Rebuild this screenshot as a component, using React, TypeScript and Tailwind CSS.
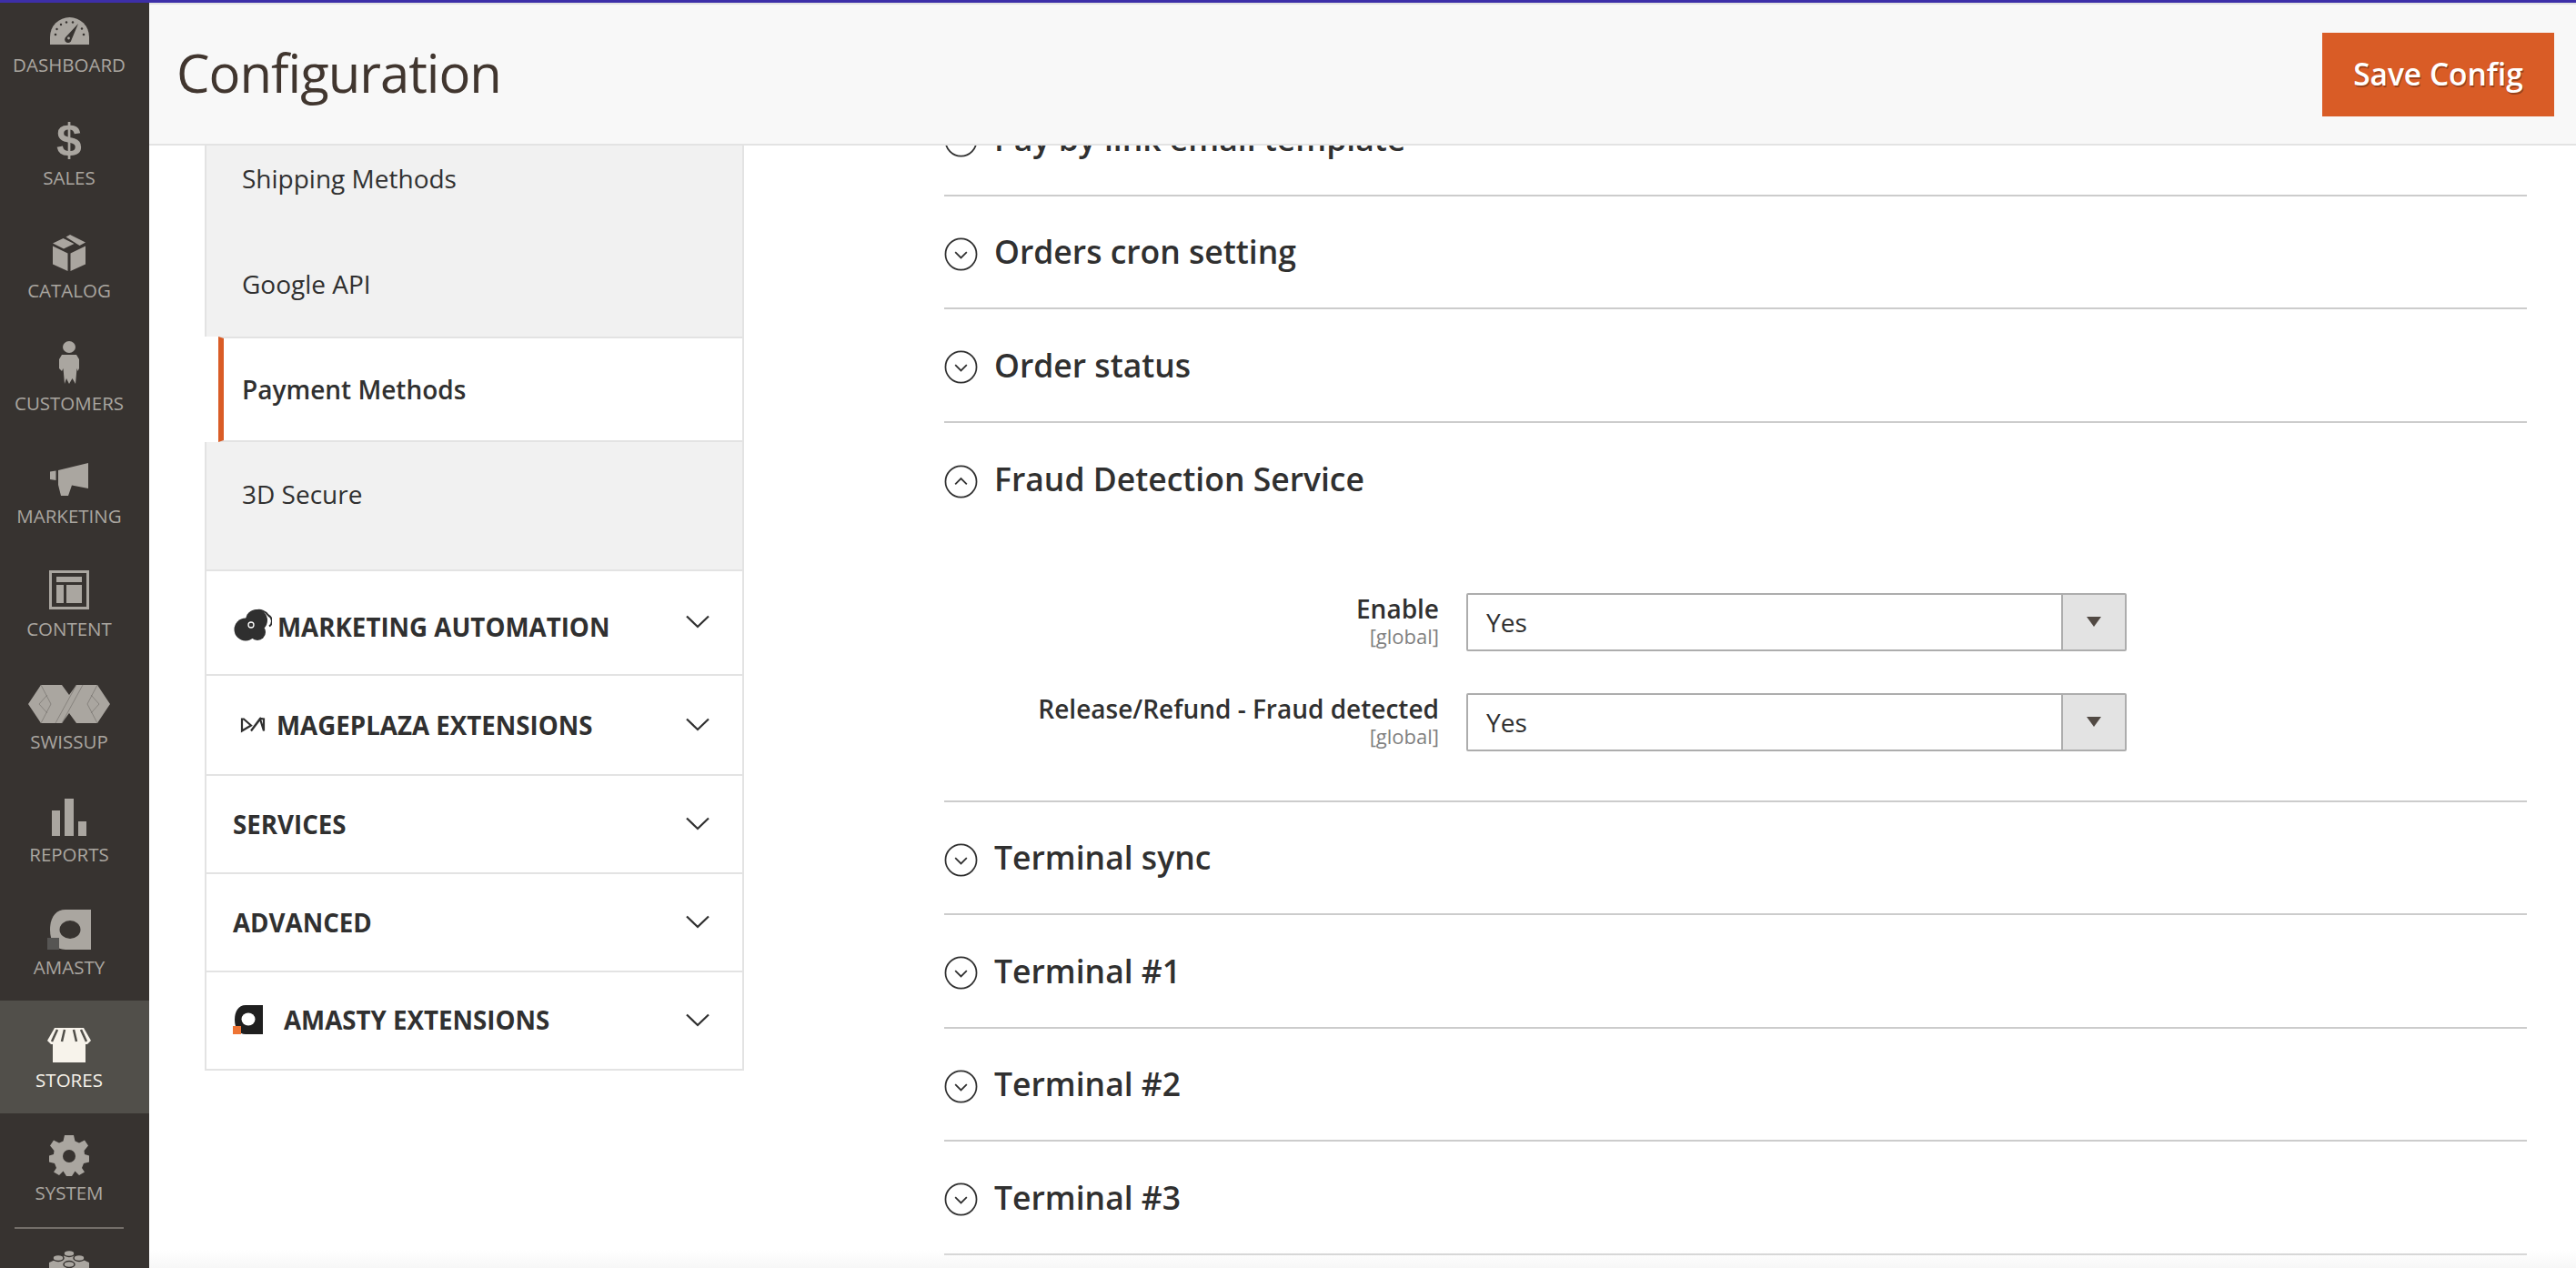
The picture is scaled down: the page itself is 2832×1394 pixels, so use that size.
import type { ReactNode } from "react";

const DashboardIcon = () => (
    <svg width="43" height="30" viewBox="0 0 43 30" className="mt-[8px]">
        <path d="M0 30V21.5a21.5 21.5 0 0 1 43 0V30Z" fill="currentColor" />
        <g fill="#373330">
            <circle cx="6" cy="19" r="1.3" />
            <circle cx="7.5" cy="13" r="1.2" />
            <circle cx="12" cy="8" r="1.2" />
            <circle cx="18" cy="5.5" r="1.2" />
            <circle cx="25" cy="5.5" r="1.2" />
            <circle cx="35" cy="12.5" r="1.2" />
            <circle cx="37" cy="19" r="1.3" />
        </g>
        <path d="M31 7 23.5 25a3.7 3.7 0 1 1-6-3.5Z" fill="#373330" />
        <circle cx="20.5" cy="23" r="1.4" fill="currentColor" />
    </svg>
);

const CatalogIcon = () => (
    <svg width="36" height="40" viewBox="0 0 36 40">
        <path d="M0 9.5 11.5 4l12 6L12 15.5Z M14.5 2.5 19 0l17 8.5-6.5 3.5Z" fill="currentColor" />
        <path d="M0 12.5 16.5 20.5V40L0 32.5Z M19.5 20.5 36 12.5V32.5L19.5 40Z" fill="currentColor" />
    </svg>
);

const CustomerIcon = () => (
    <svg width="22" height="47" viewBox="0 0 22 47" className="-mt-[8px]">
        <ellipse cx="11" cy="6.5" rx="7" ry="6.5" fill="currentColor" />
        <path d="M3 15h16l3 5v10l-1.5 3-1-3-1.5 17-3.5-6-3.5 6-3-6-2 6-1.5-17-1.5 3L0 30V20Z" fill="currentColor" />
    </svg>
);

const MarketingIcon = () => (
    <svg width="42" height="36" viewBox="0 0 42 36" className="mt-[2px]">
        <path d="M0 9.5 6.5 8.5V19L0 18Z" fill="currentColor" />
        <path d="M9 8 42 0V28L24 24.5 20 36H12L9 24Z" fill="currentColor" />
    </svg>
);

const ContentIcon = () => (
    <svg width="44" height="43" viewBox="0 0 44 43" className="-mt-[4px]">
        <path d="M0 0H44V43H0Z M3 3V40H41V3Z" fill="currentColor" fillRule="evenodd" />
        <path d="M8 7H36V13H8Z M8 16H16V36H8Z M19 16H36V36H19Z" fill="currentColor" />
    </svg>
);

const SwissupIcon = () => (
    <svg width="90" height="42" viewBox="0 0 90 42">
        <path d="M14 0H37L45 11 53 0H76L90 21 76 42H53L45 31 37 42H14L0 21Z" fill="currentColor" />
        <path d="M14 0 25 21 14 42M76 0 65 21 76 42M12 21 21 11M12 21 21 31M78 21 69 11M78 21 69 31M30 42 53 0M37 42 60 0" stroke="#7d7a75" strokeWidth="0.8" fill="none" />
    </svg>
);

const ReportsIcon = () => (
    <svg width="38" height="41" viewBox="0 0 38 41">
        <path d="M0 13H9V41H0Z M14 0H24V41H14Z M29 25H38V41H29Z" fill="currentColor" />
    </svg>
);

const AmastyIcon = () => (
    <svg width="48" height="44" viewBox="0 0 48 44">
        <path d="M20 0H48V44H20C9 44 3 35 3 22 3 9 9 0 20 0Z" fill="currentColor" />
        <ellipse cx="25" cy="22" rx="11.5" ry="10" fill="#373330" />
        <rect x="0" y="31" width="13" height="13" fill="#565553" />
    </svg>
);

const StoresIcon = () => (
    <svg width="48" height="38" viewBox="0 0 48 38" className="mt-[6px]">
        <path d="M6 18H42V38H6Z" fill="currentColor" />
        <path d="M8 0H40L48 14 44 18H4L0 14Z" fill="currentColor" />
        <path d="M11 2 5 15M19 2 16 15M29 2 32 15M37 2 43 15" stroke="#514f4a" strokeWidth="2.5" />
    </svg>
);

const SystemIcon = () => (
    <svg width="44" height="45" viewBox="0 0 44 45">
        <path
            d="M17 0H27L28.5 6.5 33 8.5 39 5.5 43 11.5 38.5 17 39 21 44 22.5V29.5L38 31 36 36 39 40.5 33 44 28.5 39.5 25 45H19L15.5 39.5 11 44 5 40.5 8 36 6 31 0 29.5V22.5L5 21 5.5 17 1 11.5 5 5.5 11 8.5 15.5 6.5Z"
            fill="currentColor"
        />
        <circle cx="22" cy="23" r="7" fill="#373330" />
    </svg>
);

const LegoIcon = () => (
    <svg width="44" height="40" viewBox="0 0 44 40">
        <path d="M0 15 22 5 44 15V40H0Z" fill="currentColor" />
        <g stroke="#373330" strokeWidth="1.5" fill="currentColor">
            <ellipse cx="22" cy="5" rx="6" ry="3.5" />
            <ellipse cx="10" cy="10" rx="6" ry="3.5" />
            <ellipse cx="33" cy="10" rx="6" ry="3.5" />
            <ellipse cx="22" cy="17" rx="6" ry="3.5" />
        </g>
    </svg>
);

const menu: { label: string; icon: ReactNode; active?: boolean }[] = [
    { label: "DASHBOARD", icon: <DashboardIcon /> },
    {
        label: "SALES",
        icon: <span className="font-['Liberation_Sans',sans-serif] text-[50px] font-bold leading-none">$</span>,
    },
    { label: "CATALOG", icon: <CatalogIcon /> },
    { label: "CUSTOMERS", icon: <CustomerIcon /> },
    { label: "MARKETING", icon: <MarketingIcon /> },
    { label: "CONTENT", icon: <ContentIcon /> },
    { label: "SWISSUP", icon: <SwissupIcon /> },
    { label: "REPORTS", icon: <ReportsIcon /> },
    { label: "AMASTY", icon: <AmastyIcon /> },
    { label: "STORES", icon: <StoresIcon />, active: true },
    { label: "SYSTEM", icon: <SystemIcon /> },
];

const Chevron = () => (
    <svg width="26" height="15" viewBox="0 0 26 15" fill="none" stroke="#303030" strokeWidth="2.2" className="-mt-[2px]">
        <path d="M1 1.5 13 13 25 1.5" />
    </svg>
);

const CircleChevron = ({ open }: { open?: boolean }) => (
    <svg width="37" height="37" viewBox="0 0 38 38" fill="none" stroke="#303030" strokeWidth="1.8" className="mt-[5px] shrink-0">
        <circle cx="19" cy="19" r="17.5" />
        <path d={open ? "M12.5 22 19 15.5 25.5 22" : "M12.5 16.5 19 23 25.5 16.5"} />
    </svg>
);

const AutomationLogo = () => (
    <svg width="42" height="36" viewBox="0 0 42 36" className="absolute left-[30px] top-[41px]">
        <circle cx="13" cy="23" r="12.5" fill="#2f2f2f" />
        <circle cx="25" cy="13" r="12" fill="#2f2f2f" />
        <circle cx="26" cy="26" r="9" fill="#2f2f2f" />
        <path d="M24 2.5a12 12 0 0 1 14 5 7 7 0 0 1 1 12" stroke="#2f2f2f" strokeWidth="2" fill="none" />
        <circle cx="19" cy="18" r="3" fill="none" stroke="#fff" strokeWidth="1.3" />
    </svg>
);

const MageplazaLogo = () => (
    <svg width="28" height="20" viewBox="0 0 28 20" className="absolute left-[37px] top-[44px]" fill="none" stroke="#2f2f2f" strokeWidth="2.2">
        <path d="M2 3.5v13l10-6L4 3.5ZM26 3.5v13L22 3.5 12 16.5 22 3Z" />
    </svg>
);

const AmastyLogo = () => (
    <svg width="33" height="32" viewBox="0 0 33 32" className="absolute left-[29px] top-[36px]">
        <path d="M14 0H33V32H14C6 32 2 25 2 16 2 7 6 0 14 0Z" fill="#1f1f1f" />
        <ellipse cx="17" cy="15.5" rx="7.5" ry="7" fill="#fff" />
        <rect x="0" y="23" width="9" height="9" fill="#ee7434" />
    </svg>
);

const groups: { label: string; height: string; pad: string; text?: string; logo?: ReactNode }[] = [
    { label: "MARKETING AUTOMATION", height: "h-[115px]", pad: "pl-[78px]", text: "mt-[10px]", logo: <AutomationLogo /> },
    { label: "MAGEPLAZA EXTENSIONS", height: "h-[110px]", pad: "pl-[77px]", text: "mt-[2px]", logo: <MageplazaLogo /> },
    { label: "SERVICES", height: "h-[108px]", pad: "pl-[29px]", text: "mt-[2px]" },
    { label: "ADVANCED", height: "h-[108px]", pad: "pl-[29px]", text: "mt-[2px]" },
    { label: "AMASTY EXTENSIONS", height: "h-[108px]", pad: "pl-[85px]", logo: <AmastyLogo /> },
];

const Section = ({ title }: { title: string }) => (
    <div className="flex h-[124.5px] items-center gap-[18px] border-b-2 border-[#cccccc]">
        <CircleChevron />
        <span className="text-[35.5px] font-semibold text-[#303030]">{title}</span>
    </div>
);

const SelectField = ({ label }: { label: string }) => (
    <div className="flex h-[64px] items-start">
        <div className="w-[574px] pr-[30px] text-right">
            <div className="mt-[1px] text-[28px] leading-[32px] font-semibold text-[#303030]">{label}</div>
            <div className="text-[22px] leading-[28px] text-[#808080]">[global]</div>
        </div>
        <div className="flex h-[64px] w-[726px] rounded-[2px] border-2 border-[#adadad] bg-white">
            <div className="flex-1 pl-[20px] text-[28px] leading-[60px] text-[#303030]">Yes</div>
            <div className="flex w-[70px] items-center justify-center border-l-2 border-[#adadad] bg-[#e3e3e3]">
                <svg width="16" height="11" viewBox="0 0 16 11">
                    <path d="M0 0H16L8 11Z" fill="#514943" />
                </svg>
            </div>
        </div>
    </div>
);

export default function App() {
    return (
        <div className="relative flex h-screen flex-col overflow-hidden bg-white font-['Open_Sans',sans-serif]">
            <div className="h-[3px] shrink-0 bg-[#3d2fa8]" />
            <div className="flex min-h-0 flex-1">
                <aside className="w-[164px] shrink-0 overflow-hidden bg-[#373330]">
                    <div className="-mt-[19px]">
                        {menu.map((item) => (
                            <div
                                key={item.label}
                                className={
                                    item.active
                                        ? "flex h-[124px] flex-col items-center bg-[#514f4a] pt-[21px] pr-[12px] text-[#f7f3eb]"
                                        : "flex h-[124px] flex-col items-center pt-[21px] pr-[12px] text-[#aaa6a0]"
                                }
                            >
                                <div className="flex h-[50px] items-center justify-center">{item.icon}</div>
                                <div className="text-[20.5px] leading-[32px]">{item.label}</div>
                            </div>
                        ))}
                        <div className="mt-[1px] ml-[16px] h-[2px] w-[120px] bg-[#736e69]" />
                        <div className="flex justify-center pt-[22px] pr-[12px] text-[#aaa6a0]">
                            <LegoIcon />
                        </div>
                    </div>
                </aside>
                <main className="relative flex min-w-0 flex-1 flex-col">
                    <header className="relative z-10 flex h-[157px] shrink-0 items-center justify-between border-t-2 border-b-2 border-[#e3e3e3] bg-[#f8f8f8] pr-[24px] pl-[30px]">
                        <h1 className="-mt-[5px] text-[58px] font-normal tracking-[-1px] text-[#41362f]">Configuration</h1>
                        <button className="h-[92px] w-[255px] bg-[#d95c26] text-[33.5px] font-semibold text-white [text-shadow:1px_2px_0_rgba(0,0,0,0.3)]">
                            Save Config
                        </button>
                    </header>
                    <div className="flex min-h-0 flex-1 overflow-hidden">
                        <nav className="-mt-[22px] ml-[61px] w-[593px] shrink-0">
                            <div className="border-r-2 border-l-2 border-[#e3e3e3] bg-[#f1f1f1]">
                                <div className="flex h-[115.5px] items-center pl-[39px] text-[28px] text-[#303030]">Shipping Methods</div>
                                <div className="flex h-[116.5px] items-center pl-[39px] text-[28px] text-[#303030]">Google API</div>
                                <div className="relative -ml-[2px] bg-white pl-[15px]">
                                    <div className="flex h-[116px] items-center border-t-2 border-b-2 border-l-[6px] border-[#e3e3e3] border-l-[#d95c26] bg-white pl-[20px] text-[28px] font-semibold text-[#303030]">
                                        Payment Methods
                                    </div>
                                </div>
                                <div className="h-[142px] border-b-2 border-[#e3e3e3] pt-[25px] pl-[39px] text-[28px] leading-[64px] text-[#303030]">
                                    3D Secure
                                </div>
                            </div>
                            {groups.map((group) => (
                                <div
                                    key={group.label}
                                    className={`relative flex items-center justify-between border-r-2 border-b-2 border-l-2 border-[#e3e3e3] pr-[36px] ${group.height} ${group.pad}`}
                                >
                                    {group.logo}
                                    <span className={`text-[27.7px] font-bold text-[#303030] ${group.text ?? ""}`}>{group.label}</span>
                                    <Chevron />
                                </div>
                            ))}
                        </nav>
                        <section className="-mt-[69px] ml-[220px] w-[1740px] shrink-0">
                            <Section title="Pay by link email template" />
                            <Section title="Orders cron setting" />
                            <Section title="Order status" />
                            <div className="border-b-2 border-[#cccccc] pb-[54px]">
                                <div className="flex h-[124px] items-center gap-[18px]">
                                    <CircleChevron open />
                                    <span className="text-[35.5px] font-semibold text-[#303030]">Fraud Detection Service</span>
                                </div>
                                <div className="flex flex-col gap-[46px] pt-[63px]">
                                    <SelectField label="Enable" />
                                    <SelectField label="Release/Refund - Fraud detected" />
                                </div>
                            </div>
                            <Section title="Terminal sync" />
                            <Section title="Terminal #1" />
                            <Section title="Terminal #2" />
                            <Section title="Terminal #3" />
                        </section>
                    </div>
                    <div className="pointer-events-none absolute right-0 bottom-0 left-0 h-[20px] bg-gradient-to-t from-[#f7f7f7] to-transparent" />
                </main>
            </div>
        </div>
    );
}
